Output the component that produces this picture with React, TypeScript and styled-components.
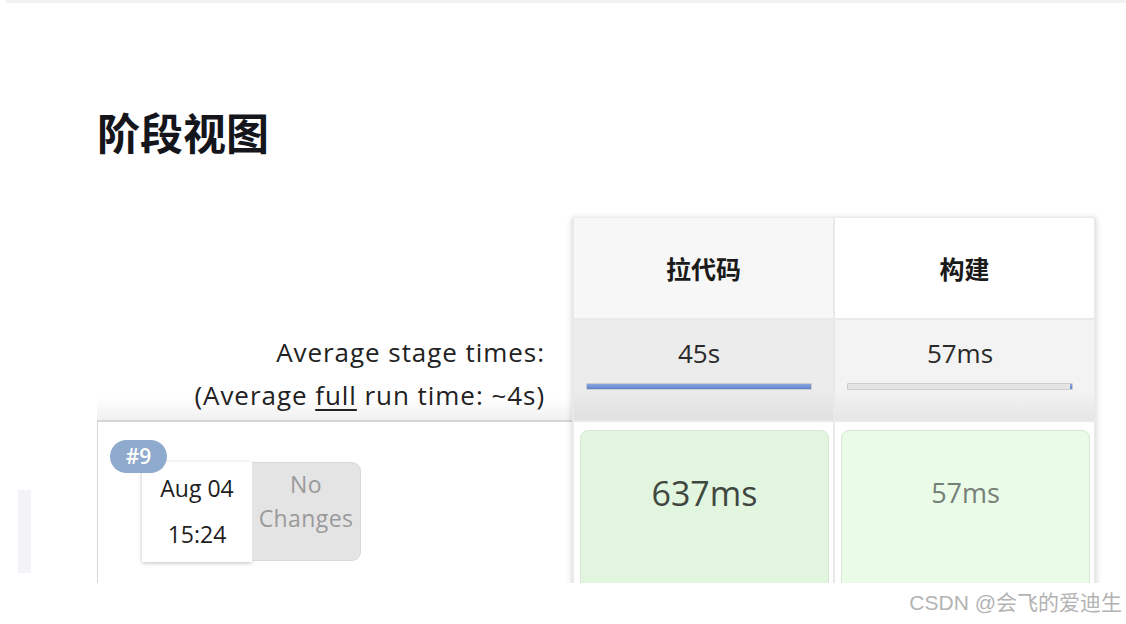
import styled, { createGlobalStyle } from "styled-components";

const GlobalStyle = createGlobalStyle`
  html, body {
    margin: 0;
    padding: 0;
    background: #ffffff;
  }
  body {
    font-family: "Open Sans", "Noto Sans CJK SC", sans-serif;
    color: #222;
  }
`;

const Page = styled.div`
  width: 1126px;
  height: 624px;
  overflow: hidden;
  background: #fff;
`;

const TopBar = styled.div`
  height: 3px;
  margin-left: 6px;
  background: #f2f2f2;
`;

const Viewport = styled.div`
  height: 580px;
  overflow: hidden;
  display: flex;
`;

const Gutter = styled.div`
  width: 97px;
  flex: none;
  box-sizing: border-box;
  padding: 487px 0 0 18px;
`;

const GutterBar = styled.div`
  width: 13px;
  height: 83px;
  background: #f3f3f8;
`;

const Main = styled.div`
  width: 1000px;
  padding-top: 101px;
`;

const Title = styled.h1`
  margin: 0 0 60px;
  font-family: "Noto Sans CJK SC", sans-serif;
  font-size: 43px;
  line-height: 54px;
  font-weight: 700;
  color: #15151c;
`;

const StageView = styled.div`
  display: flex;
  align-items: flex-start;
`;

const LabelColumn = styled.div`
  width: 475px;
  flex: none;
  display: flex;
  flex-direction: column;
`;

const BlankCell = styled.div`
  height: 102px;
`;

const AvgLabel = styled.div`
  height: 102px;
  box-sizing: border-box;
  padding: 11px 27px 0 0;
  text-align: right;
  font-size: 26px;
  letter-spacing: 0.95px;
  line-height: 43px;
  color: #222;
  background: linear-gradient(to bottom, #ffffff 78%, #f0f0f0);
  border-bottom: 2px solid #d6d6d6;
`;

const Underlined = styled.span`
  text-decoration: underline;
  text-underline-offset: 4px;
`;

const RunLabel = styled.div`
  height: 200px;
  box-sizing: border-box;
  border-left: 1px solid #d8d8d8;
  padding: 40px 0 0 44px;
`;

const RunGroup = styled.div`
  position: relative;
  display: flex;
  width: max-content;
`;

const Badge = styled.div`
  position: absolute;
  top: -22px;
  left: -32px;
  width: 57px;
  height: 33px;
  border-radius: 17px;
  background: #8eaacc;
  color: #fff;
  font-size: 21px;
  font-weight: 600;
  line-height: 33px;
  text-align: center;
  z-index: 1;
`;

const DateCard = styled.div`
  width: 110px;
  height: 100px;
  box-sizing: border-box;
  padding-top: 3px;
  background: #fff;
  box-shadow: 0 1px 4px rgba(0, 0, 0, 0.25);
  text-align: center;
  font-size: 23px;
  line-height: 46px;
  color: #1e1e1e;
`;

const ChangesBox = styled.div`
  width: 109px;
  height: 99px;
  box-sizing: border-box;
  padding-top: 4px;
  background: #e4e4e4;
  border: 1px solid #d9d9d9;
  border-left: none;
  border-radius: 0 9px 9px 0;
  text-align: center;
  font-size: 23px;
  letter-spacing: 0.4px;
  line-height: 34px;
  color: #9a9a9a;
`;

const StageTable = styled.div`
  display: flex;
  gap: 2px;
  padding: 0 2px;
  background: #e9e9e9;
  box-shadow: 0 0 6px rgba(0, 0, 0, 0.18);
`;

const StageColumn = styled.div`
  width: 259px;
  display: flex;
  flex-direction: column;
  gap: 2px;
`;

const StageHeader = styled.div<{ $shade: string }>`
  height: 100px;
  display: flex;
  align-items: center;
  justify-content: center;
  background: ${(p) => p.$shade};
  font-family: "Noto Sans CJK SC", sans-serif;
  font-size: 25px;
  font-weight: 700;
  color: #1a1a1a;
`;

const AvgCell = styled.div<{ $top: string; $bottom: string }>`
  height: 100px;
  box-sizing: border-box;
  padding: 12px 21px 0 12px;
  background: linear-gradient(to bottom, ${(p) => p.$top} 70%, ${(p) => p.$bottom});
  text-align: center;
  font-size: 26px;
  line-height: 42px;
  color: #2a2a2a;
`;

const Bar = styled.div`
  height: 7px;
  margin-top: 9px;
  box-sizing: border-box;
  border: 1px solid #cdcdcd;
  background: #e4e4e4;
  border-radius: 1px;
  overflow: hidden;
  display: flex;
  justify-content: flex-end;
`;

const BarFill = styled.div`
  height: 100%;
  background: linear-gradient(to bottom, #8aa6dd, #5e82cc);
`;

const RunArea = styled.div`
  height: 200px;
  box-sizing: border-box;
  padding: 8px 4px 0 6px;
  background: #fff;
`;

const RunCell = styled.div<{ $bg: string; $size: number; $color: string }>`
  height: 180px;
  box-sizing: border-box;
  padding-top: 38px;
  border: 1px solid #d6e8d4;
  border-radius: 8px;
  background: ${(p) => p.$bg};
  text-align: center;
  font-size: ${(p) => p.$size}px;
  line-height: 48px;
  color: ${(p) => p.$color};
`;

const Footer = styled.div`
  display: flex;
  justify-content: flex-end;
  padding: 9px 4px 0 0;
`;

const Watermark = styled.span`
  font-family: "Liberation Sans", "Noto Sans CJK SC", sans-serif;
  font-size: 21px;
  line-height: 22px;
  color: #b3b3b3;
`;

const stages = [
  {
    name: "拉代码",
    head: "#f7f7f7",
    avg: "45s",
    top: "#ececec",
    bottom: "#e0e0e0",
    fill: 100,
    run: "637ms",
    runBg: "#e2f5df",
    runSize: 34,
    runColor: "#3f4740",
  },
  {
    name: "构建",
    head: "#ffffff",
    avg: "57ms",
    top: "#f3f3f3",
    bottom: "#e6e6e6",
    fill: 1,
    run: "57ms",
    runBg: "#eafbe8",
    runSize: 27,
    runColor: "#76807a",
  },
];

export default function App() {
  return (
    <Page>
      <GlobalStyle />
      <TopBar />
      <Viewport>
        <Gutter>
          <GutterBar />
        </Gutter>
        <Main>
          <Title>阶段视图</Title>
          <StageView>
            <LabelColumn>
              <BlankCell />
              <AvgLabel>
                Average stage times:
                <br />
                (Average <Underlined>full</Underlined> run time: ~4s)
              </AvgLabel>
              <RunLabel>
                <RunGroup>
                  <Badge>#9</Badge>
                  <DateCard>
                    Aug 04
                    <br />
                    15:24
                  </DateCard>
                  <ChangesBox>
                    No
                    <br />
                    Changes
                  </ChangesBox>
                </RunGroup>
              </RunLabel>
            </LabelColumn>
            <StageTable>
              {stages.map((s) => (
                <StageColumn key={s.name}>
                  <StageHeader $shade={s.head}>{s.name}</StageHeader>
                  <AvgCell $top={s.top} $bottom={s.bottom}>
                    {s.avg}
                    <Bar>
                      <BarFill style={{ width: `${s.fill}%` }} />
                    </Bar>
                  </AvgCell>
                  <RunArea>
                    <RunCell $bg={s.runBg} $size={s.runSize} $color={s.runColor}>
                      {s.run}
                    </RunCell>
                  </RunArea>
                </StageColumn>
              ))}
            </StageTable>
          </StageView>
        </Main>
      </Viewport>
      <Footer>
        <Watermark>CSDN @会飞的爱迪生</Watermark>
      </Footer>
    </Page>
  );
}
